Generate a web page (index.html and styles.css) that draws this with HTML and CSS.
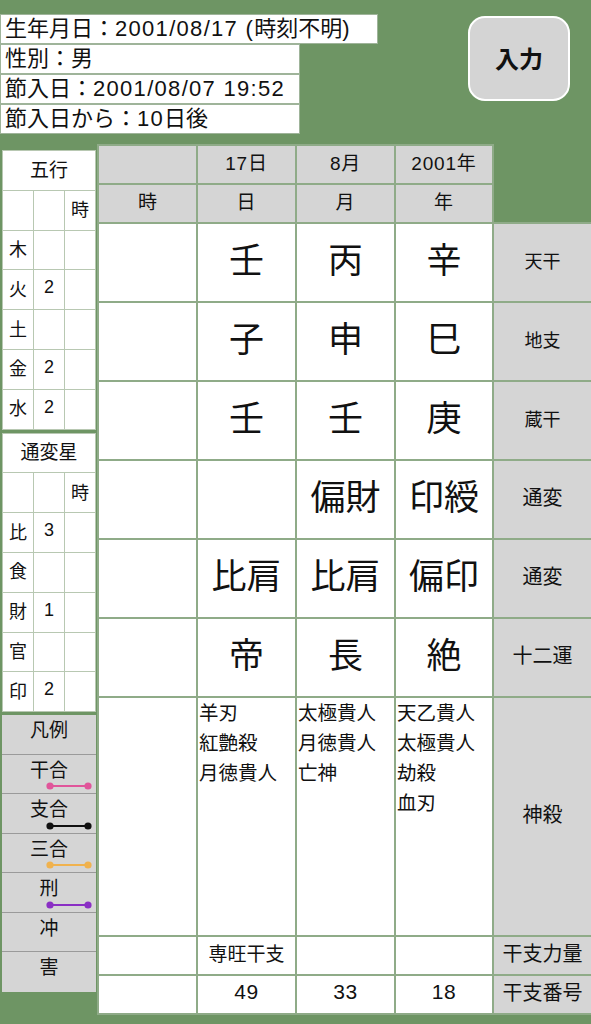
FILE: index.html
```html
<!DOCTYPE html>
<html lang="ja">
<head>
<meta charset="utf-8">
<link rel="stylesheet" href="styles.css">
</head>
<body>
<div class="top">
  <div class="info">
    <div class="info-row wide">生年月日：<span class="num">2001/08/17 (</span>時刻不明<span class="num">)</span></div>
    <div class="info-row">性別：男</div>
    <div class="info-row">節入日：<span class="num">2001/08/07 19:52</span></div>
    <div class="info-row">節入日から：<span class="num">10</span>日後</div>
  </div>
  <button class="input-btn">入力</button>
</div>
<div class="main">
  <div class="side">
    <table class="mini">
      <tr><th colspan="3">五行</th></tr>
      <tr><td></td><td></td><td>時</td></tr>
      <tr><td>木</td><td></td><td></td></tr>
      <tr><td>火</td><td>2</td><td></td></tr>
      <tr><td>土</td><td></td><td></td></tr>
      <tr><td>金</td><td>2</td><td></td></tr>
      <tr><td>水</td><td>2</td><td></td></tr>
    </table>
    <table class="mini">
      <tr><th colspan="3">通変星</th></tr>
      <tr><td></td><td></td><td>時</td></tr>
      <tr><td>比</td><td>3</td><td></td></tr>
      <tr><td>食</td><td></td><td></td></tr>
      <tr><td>財</td><td>1</td><td></td></tr>
      <tr><td>官</td><td></td><td></td></tr>
      <tr><td>印</td><td>2</td><td></td></tr>
    </table>
    <div class="legend">
      <div class="leg-item head">凡例</div>
      <div class="leg-item"><span>干合</span><svg class="leg-line" width="46" height="10" viewBox="0 0 46 10"><line x1="4" y1="5" x2="42" y2="5" stroke="#e0559a" stroke-width="2"/><circle cx="4" cy="5" r="3.6" fill="#e0559a"/><circle cx="42" cy="5" r="3.6" fill="#e0559a"/></svg></div>
      <div class="leg-item"><span>支合</span><svg class="leg-line" width="46" height="10" viewBox="0 0 46 10"><line x1="4" y1="5" x2="42" y2="5" stroke="#111" stroke-width="2"/><circle cx="4" cy="5" r="3.6" fill="#111"/><circle cx="42" cy="5" r="3.6" fill="#111"/></svg></div>
      <div class="leg-item"><span>三合</span><svg class="leg-line" width="46" height="10" viewBox="0 0 46 10"><line x1="4" y1="5" x2="42" y2="5" stroke="#f0b24e" stroke-width="2"/><circle cx="4" cy="5" r="3.6" fill="#f0b24e"/><circle cx="42" cy="5" r="3.6" fill="#f0b24e"/></svg></div>
      <div class="leg-item"><span>刑</span><svg class="leg-line" width="46" height="10" viewBox="0 0 46 10"><line x1="4" y1="5" x2="42" y2="5" stroke="#8a2fc4" stroke-width="2"/><circle cx="4" cy="5" r="3.6" fill="#8a2fc4"/><circle cx="42" cy="5" r="3.6" fill="#8a2fc4"/></svg></div>
      <div class="leg-item"><span>冲</span></div>
      <div class="leg-item"><span>害</span></div>
    </div>
  </div>
  <table class="chart">
    <colgroup><col class="c1"><col class="c2"><col class="c3"><col class="c4"><col class="c5"></colgroup>
    <tr class="h"><td class="g"></td><td class="g">17日</td><td class="g">8月</td><td class="g">2001年</td><td class="none"></td></tr>
    <tr class="h"><td class="g">時</td><td class="g">日</td><td class="g">月</td><td class="g">年</td><td class="none"></td></tr>
    <tr class="r80"><td></td><td class="big">壬</td><td class="big">丙</td><td class="big">辛</td><td class="lab sm">天干</td></tr>
    <tr class="r80"><td></td><td class="big">子</td><td class="big">申</td><td class="big">巳</td><td class="lab sm">地支</td></tr>
    <tr class="r80"><td></td><td class="big">壬</td><td class="big">壬</td><td class="big">庚</td><td class="lab sm">蔵干</td></tr>
    <tr class="r80"><td></td><td class="big"></td><td class="big">偏財</td><td class="big">印綬</td><td class="lab">通変</td></tr>
    <tr class="r80"><td></td><td class="big">比肩</td><td class="big">比肩</td><td class="big">偏印</td><td class="lab">通変</td></tr>
    <tr class="r80"><td></td><td class="big">帝</td><td class="big">長</td><td class="big">絶</td><td class="lab">十二運</td></tr>
    <tr class="shin"><td></td><td class="list">羊刃<br>紅艶殺<br>月徳貴人</td><td class="list">太極貴人<br>月徳貴人<br>亡神</td><td class="list">天乙貴人<br>太極貴人<br>劫殺<br>血刃</td><td class="lab">神殺</td></tr>
    <tr class="r39"><td></td><td>専旺干支</td><td></td><td></td><td class="lab">干支力量</td></tr>
    <tr class="r39"><td></td><td class="n">49</td><td class="n">33</td><td class="n">18</td><td class="lab">干支番号</td></tr>
  </table>
</div>
</body>
</html>
```
FILE: styles.css
```css
* { box-sizing: border-box; }
html, body { margin: 0; padding: 0; }
body {
  width: 591px;
  height: 1024px;
  background: #6e9564;
  font-family: "Liberation Sans", "Noto Sans CJK JP", sans-serif;
  color: #111;
  overflow: hidden;
}
.top {
  display: flex;
  justify-content: space-between;
  align-items: flex-start;
  padding-top: 14px;
}
.info { display: flex; flex-direction: column; }
.info-row {
  width: 300px;
  height: 30px;
  background: #fff;
  border: 1px solid #9fb49a;
  font-size: 22px;
  line-height: 27px;
  padding-left: 4px;
  white-space: nowrap;
}
.info-row.wide { width: 378px; }
.num { letter-spacing: 1.3px; }
.input-btn {
  margin-top: 2px;
  margin-right: 21px;
  width: 102px;
  height: 85px;
  background: #d4d4d4;
  border: 2.5px solid #fff;
  border-radius: 17px;
  font-family: inherit;
  font-size: 24px;
  font-weight: bold;
  color: #111;
  padding: 0 0 3px;
}
.main {
  display: flex;
  align-items: flex-start;
  margin-top: 10px;
}
.side {
  width: 97px;
  padding: 6px 1px 0 2px;
  display: flex;
  flex-direction: column;
  gap: 3px;
}
.mini {
  width: 94px;
  border-collapse: collapse;
  background: #fff;
  table-layout: fixed;
}
.mini th, .mini td {
  border: 1px solid #b8c8b2;
  height: 39.8px;
  padding: 0 0 4px;
  font-weight: normal;
}
.mini th { font-size: 19px; text-align: center; }
.mini td { font-size: 18px; text-align: center; }
.mini td:first-child { width: 31px; }
.mini td:nth-child(2) { width: 31px; }
.legend {
  width: 94px;
  background: #d5d5d5;
  margin-top: 0;
}
.leg-item {
  position: relative;
  height: 39.5px;
  border-bottom: 1px solid #9a9a9a;
  text-align: center;
  font-size: 19px;
  line-height: 22px;
  padding-top: 5px;
}
.leg-item:last-child { border-bottom: none; }
.leg-item.head { line-height: 32px; font-size: 19px; padding-top: 0; }
.leg-line {
  position: absolute;
  left: 44px;
  bottom: 2px;
}
.chart {
  border-collapse: collapse;
  table-layout: fixed;
  width: 494px;
  margin-top: 0;
}
.chart col.c1 { width: 99px; }
.chart col.c2 { width: 99px; }
.chart col.c3 { width: 99px; }
.chart col.c4 { width: 98px; }
.chart col.c5 { width: 99px; }
.chart td {
  border: 2px solid #8fab88;
  background: #fff;
  text-align: center;
  vertical-align: middle;
  padding: 0 0 6px;
  font-size: 19px;
}
.chart td.g { background: #d5d5d5; }
.chart td.g:not(:first-child) { letter-spacing: 0.8px; }
.chart td.none { background: transparent; border: none; }
.chart tr.h td { height: 39px; }
.chart tr.r80 td { height: 79px; }
.chart tr.r39 td { height: 39px; }
.chart tr.shin td { height: 239px; }
.chart td.big { font-size: 35px; padding-bottom: 10px; }
.chart td.lab { background: #d5d5d5; font-size: 20px; }
.chart td.lab.sm { font-size: 18px; }
.chart td.n { font-size: 21px; letter-spacing: 0.5px; }
.chart td.list {
  vertical-align: top;
  text-align: left;
  padding: 0 0 0 1px;
  line-height: 30px;
  font-size: 19.5px;
}
```
